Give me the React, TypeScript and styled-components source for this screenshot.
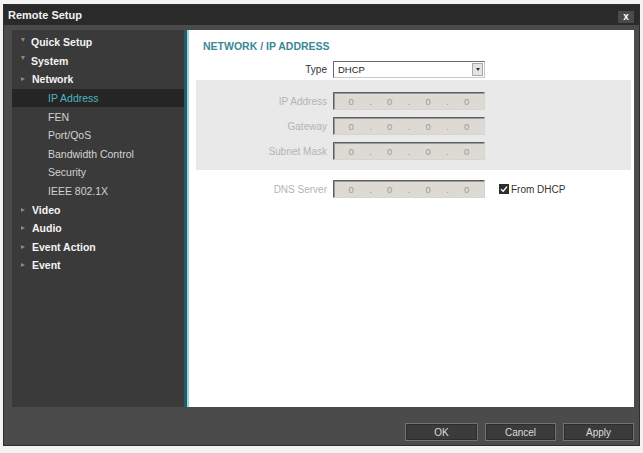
import React from 'react';
import styled, { createGlobalStyle } from 'styled-components';

const GlobalStyle = createGlobalStyle`
  html, body {
    margin: 0;
    padding: 0;
    background: #f3f3f3;
  }
  body {
    font-family: "Liberation Sans", Arial, sans-serif;
    font-size: 10.5px;
  }
`;

const Window = styled.div`
  width: 637px;
  height: 442px;
  margin: 4px 0 0 3px;
  box-sizing: border-box;
  background: #4b4b4b;
  border: 1px solid #2e2e2e;
  display: flex;
  flex-direction: column;
`;

const TitleBar = styled.div`
  height: 20px;
  flex-shrink: 0;
  background: #2a2a2a;
  display: flex;
  align-items: center;
  justify-content: space-between;
  padding: 0 5px 0 4px;
  color: #f2f2f2;
  font-size: 11px;
  font-weight: bold;
`;

const CloseBox = styled.div`
  width: 16px;
  height: 12px;
  margin-top: 4px;
  background: #4a4a4a;
  color: #fff;
  font-size: 10px;
  font-weight: bold;
  line-height: 11px;
  text-align: center;
`;

const Body = styled.div`
  display: flex;
  height: 377px;
  padding: 5px 5px 0 8px;
  flex-shrink: 0;
`;

const Tree = styled.ul`
  width: 172px;
  margin: 0;
  padding: 3px 0 0;
  list-style: none;
  background: #3a3a3a;
`;

const TreeItem = styled.li<{ $sub?: boolean; $active?: boolean }>`
  height: 18.6px;
  display: flex;
  align-items: center;
  padding-left: ${({ $sub }) => ($sub ? '36px' : '9px')};
  background: ${({ $active }) => ($active ? '#252525' : 'transparent')};
  color: ${({ $sub, $active }) => ($active ? '#4fb4c0' : $sub ? '#d2d2d2' : '#f4f4f4')};
  font-weight: ${({ $sub }) => ($sub ? 'normal' : 'bold')};
  font-size: 10.5px;
  white-space: nowrap;
`;

const Arrow = styled.span<{ $open?: boolean }>`
  display: inline-block;
  width: 0;
  height: 0;
  border-style: solid;
  ${({ $open }) =>
    $open
      ? `border-width: 4px 2.5px 0 2.5px; border-color: #8a8a8a transparent transparent transparent; margin-top: -5px; margin-right: 6px;`
      : `border-width: 2.5px 0 2.5px 4px; border-color: transparent transparent transparent #8a8a8a; margin-right: 7px;`}
`;

const Content = styled.div`
  flex: 1;
  background: #fff;
  border-left: 3px solid #1f5d67;
  box-shadow: inset 2px 0 0 #9dd6de;
  padding-top: 8px;
  display: flex;
  flex-direction: column;
`;

const Heading = styled.div`
  padding-left: 16px;
  height: 16px;
  line-height: 16px;
  font-weight: bold;
  font-size: 10.5px;
  color: #3a8896;
`;

const Row = styled.div<{ $top?: number }>`
  display: flex;
  align-items: center;
  margin-top: ${({ $top }) => $top ?? 0}px;
`;

const Label = styled.div<{ $width: number; $muted?: boolean }>`
  width: ${({ $width }) => $width}px;
  box-sizing: border-box;
  padding-right: 6px;
  text-align: right;
  font-size: 10px;
  color: ${({ $muted }) => ($muted ? '#b4b4b4' : '#333')};
`;

const Select = styled.div`
  width: 152px;
  height: 17px;
  box-sizing: border-box;
  border: 1px solid;
  border-color: #6a6a6a #c8c8c8 #c8c8c8 #6a6a6a;
  background: #fff;
  display: flex;
  align-items: center;
  padding-left: 4px;
  font-size: 9.5px;
  color: #222;
`;

const SelectValue = styled.span`
  flex: 1;
`;

const SelectButton = styled.div`
  width: 11px;
  height: 13px;
  margin-right: 1px;
  background: #e4e4e4;
  border: 1px solid #a8a8a8;
  box-sizing: border-box;
  display: flex;
  align-items: center;
  justify-content: center;
`;

const DownTri = styled.span`
  width: 0;
  height: 0;
  border-style: solid;
  border-width: 3px 2.5px 0 2.5px;
  border-color: #333 transparent transparent transparent;
`;

const Band = styled.div`
  margin: 2px 3px 0 9px;
  padding: 12px 0 10px;
  background: #e9e9e9;
  display: flex;
  flex-direction: column;
  gap: 7px;
`;

const IpField = styled.div`
  width: 152px;
  height: 18px;
  box-sizing: border-box;
  border: 1px solid;
  border-color: #5e5e5e #d4d4d4 #d4d4d4 #5e5e5e;
  box-shadow: inset 1px 1px 0 #9a9a9a;
  background: #dcdad2;
  display: flex;
  align-items: center;
  font-size: 9.5px;
  color: #9a9a9a;
`;

const Octet = styled.span`
  flex: 1;
  text-align: center;
`;

const Dot = styled.span`
  width: 4px;
  text-align: center;
`;

const Check = styled.div`
  display: flex;
  align-items: center;
  margin-left: 14px;
  font-size: 10px;
  color: #333;
`;

const CheckBox = styled.span`
  width: 10px;
  height: 10px;
  margin-right: 2px;
  background: #2e2e2e;
  display: flex;
  align-items: center;
  justify-content: center;
`;

const Footer = styled.div`
  flex: 1;
  display: flex;
  justify-content: flex-end;
  align-items: flex-start;
  gap: 7px;
  padding: 16px 5px 0 0;
`;

const Button = styled.button<{ $width: number }>`
  width: ${({ $width }) => $width}px;
  height: 18px;
  padding: 0;
  background: #3b3b3b;
  border: 1px solid #727272;
  box-shadow: inset 0 0 0 1px #2c2c2c;
  color: #dcdcdc;
  font-family: "Liberation Sans", Arial, sans-serif;
  font-size: 10px;
`;

const tree = [
  { label: 'Quick Setup', open: true },
  { label: 'System', open: true },
  { label: 'Network' },
  { label: 'IP Address', sub: true, active: true },
  { label: 'FEN', sub: true },
  { label: 'Port/QoS', sub: true },
  { label: 'Bandwidth Control', sub: true },
  { label: 'Security', sub: true },
  { label: 'IEEE 802.1X', sub: true },
  { label: 'Video' },
  { label: 'Audio' },
  { label: 'Event Action' },
  { label: 'Event' },
];

const Ip = () => (
  <IpField>
    <Octet>0</Octet>
    <Dot>.</Dot>
    <Octet>0</Octet>
    <Dot>.</Dot>
    <Octet>0</Octet>
    <Dot>.</Dot>
    <Octet>0</Octet>
  </IpField>
);

const App = () => {
  return (
    <>
      <GlobalStyle />
      <Window>
        <TitleBar>
          <span>Remote Setup</span>
          <CloseBox>x</CloseBox>
        </TitleBar>
        <Body>
          <Tree>
            {tree.map((t) => (
              <TreeItem key={t.label} $sub={t.sub} $active={t.active}>
                {!t.sub && <Arrow $open={t.open} />}
                {t.label}
              </TreeItem>
            ))}
          </Tree>
          <Content>
            <Heading>NETWORK / IP ADDRESS</Heading>
            <Row $top={7}>
              <Label $width={146}>Type</Label>
              <Select>
                <SelectValue>DHCP</SelectValue>
                <SelectButton>
                  <DownTri />
                </SelectButton>
              </Select>
            </Row>
            <Band>
              <Row>
                <Label $width={137} $muted>IP Address</Label>
                <Ip />
              </Row>
              <Row>
                <Label $width={137} $muted>Gateway</Label>
                <Ip />
              </Row>
              <Row>
                <Label $width={137} $muted>Subnet Mask</Label>
                <Ip />
              </Row>
            </Band>
            <Row $top={10}>
              <Label $width={146} $muted>DNS Server</Label>
              <Ip />
              <Check>
                <CheckBox>
                  <svg width="8" height="8" viewBox="0 0 8 8">
                    <path d="M1 4.2 L3.2 6.3 L7 1.6" stroke="#fff" strokeWidth="1.4" fill="none" />
                  </svg>
                </CheckBox>
                From DHCP
              </Check>
            </Row>
          </Content>
        </Body>
        <Footer>
          <Button $width={73}>OK</Button>
          <Button $width={71}>Cancel</Button>
          <Button $width={71}>Apply</Button>
        </Footer>
      </Window>
    </>
  );
};

export default App;
